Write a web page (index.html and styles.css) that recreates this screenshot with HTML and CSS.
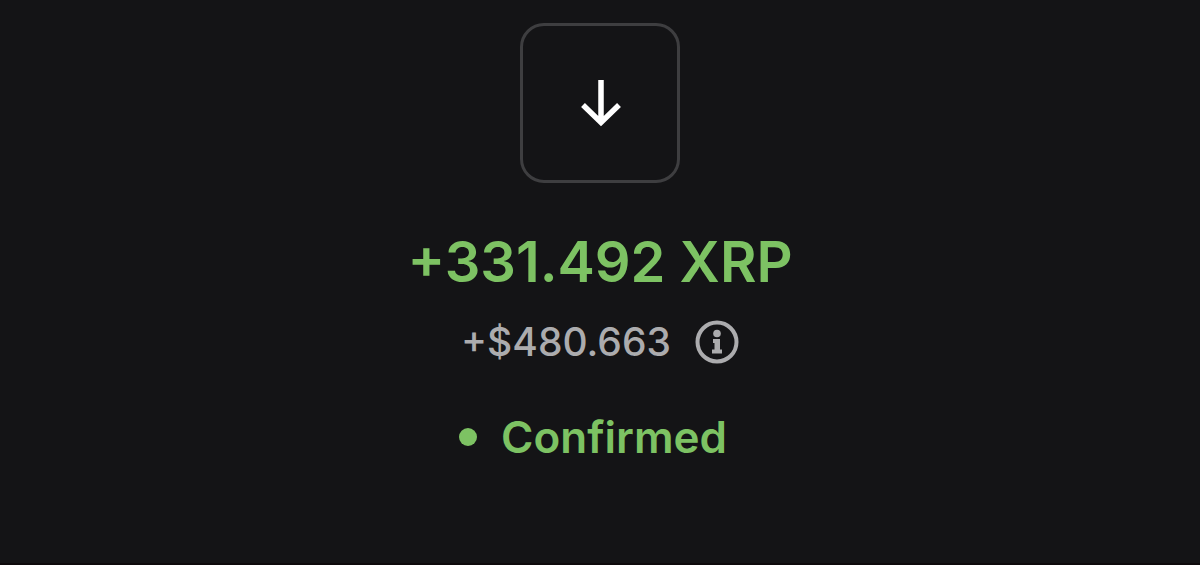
FILE: index.html
```
<!DOCTYPE html>
<html lang="en">
<head>
<meta charset="utf-8">
<meta name="viewport" content="width=device-width, initial-scale=1">
<title>Transaction details</title>
<link rel="stylesheet" href="styles.css">
</head>
<body>
<main class="summary">
  <div class="direction">
    <svg class="direction-icon" viewBox="0 0 48 48" role="img" aria-label="Received">
      <path d="M25 1V43M7 26L25 43.500L43 26" fill="none" stroke="currentColor" stroke-width="5.500"/>
    </svg>
  </div>
  <h1 class="amount">+331.492 XRP</h1>
  <div class="fiat">
    <span>+$480.663</span>
    <button class="info" type="button" aria-label="Price information">
      <svg class="info-icon" viewBox="0 0 44 44" aria-hidden="true">
        <circle cx="22" cy="22" r="19.5" fill="none" stroke="currentColor" stroke-width="4"/>
        <circle cx="22" cy="13.500" r="3.800" fill="currentColor"/>
        <path d="M18 19H25V29.500H27V33.500H17V29.500H19.500V23H18Z" fill="currentColor"/>
      </svg>
    </button>
  </div>
  <p class="status"><span class="dot"></span>Confirmed</p>
</main>
</body>
</html>
```
FILE: styles.css
```
* {
  box-sizing: border-box;
}

body {
  margin: 0;
  background: #141416;
  font-family: Inter, "Liberation Sans", sans-serif;
}

.summary {
  display: flex;
  flex-direction: column;
  align-items: center;
  min-height: 100vh;
  padding: 23px 16px 0;
  border-bottom: 2px solid #0e0a0c;
}

.direction {
  display: grid;
  place-items: center;
  width: 160px;
  height: 160px;
  border: 3px solid #3e3e40;
  border-radius: 24px;
  color: #fff;
}

.direction-icon {
  width: 48px;
  height: 48px;
}

.amount {
  margin: 43px 0 0;
  font-size: 56px;
  line-height: 72px;
  font-weight: 600;
  color: #7dc263;
}

.fiat {
  display: flex;
  align-items: center;
  gap: 24px;
  margin-top: 20px;
  font-size: 39px;
  line-height: 48px;
  font-weight: 500;
  color: #acacae;
}

.info {
  display: flex;
  padding: 0;
  border: 0;
  background: none;
  color: inherit;
}

.info-icon {
  width: 44px;
  height: 44px;
}

.status {
  display: flex;
  align-items: center;
  gap: 24px;
  margin: 43px 0 0;
  padding-right: 14px;
  font-size: 44px;
  line-height: 56px;
  font-weight: 600;
  color: #7dc263;
}

.dot {
  width: 18px;
  height: 18px;
  border-radius: 50%;
  background: currentColor;
}
```
